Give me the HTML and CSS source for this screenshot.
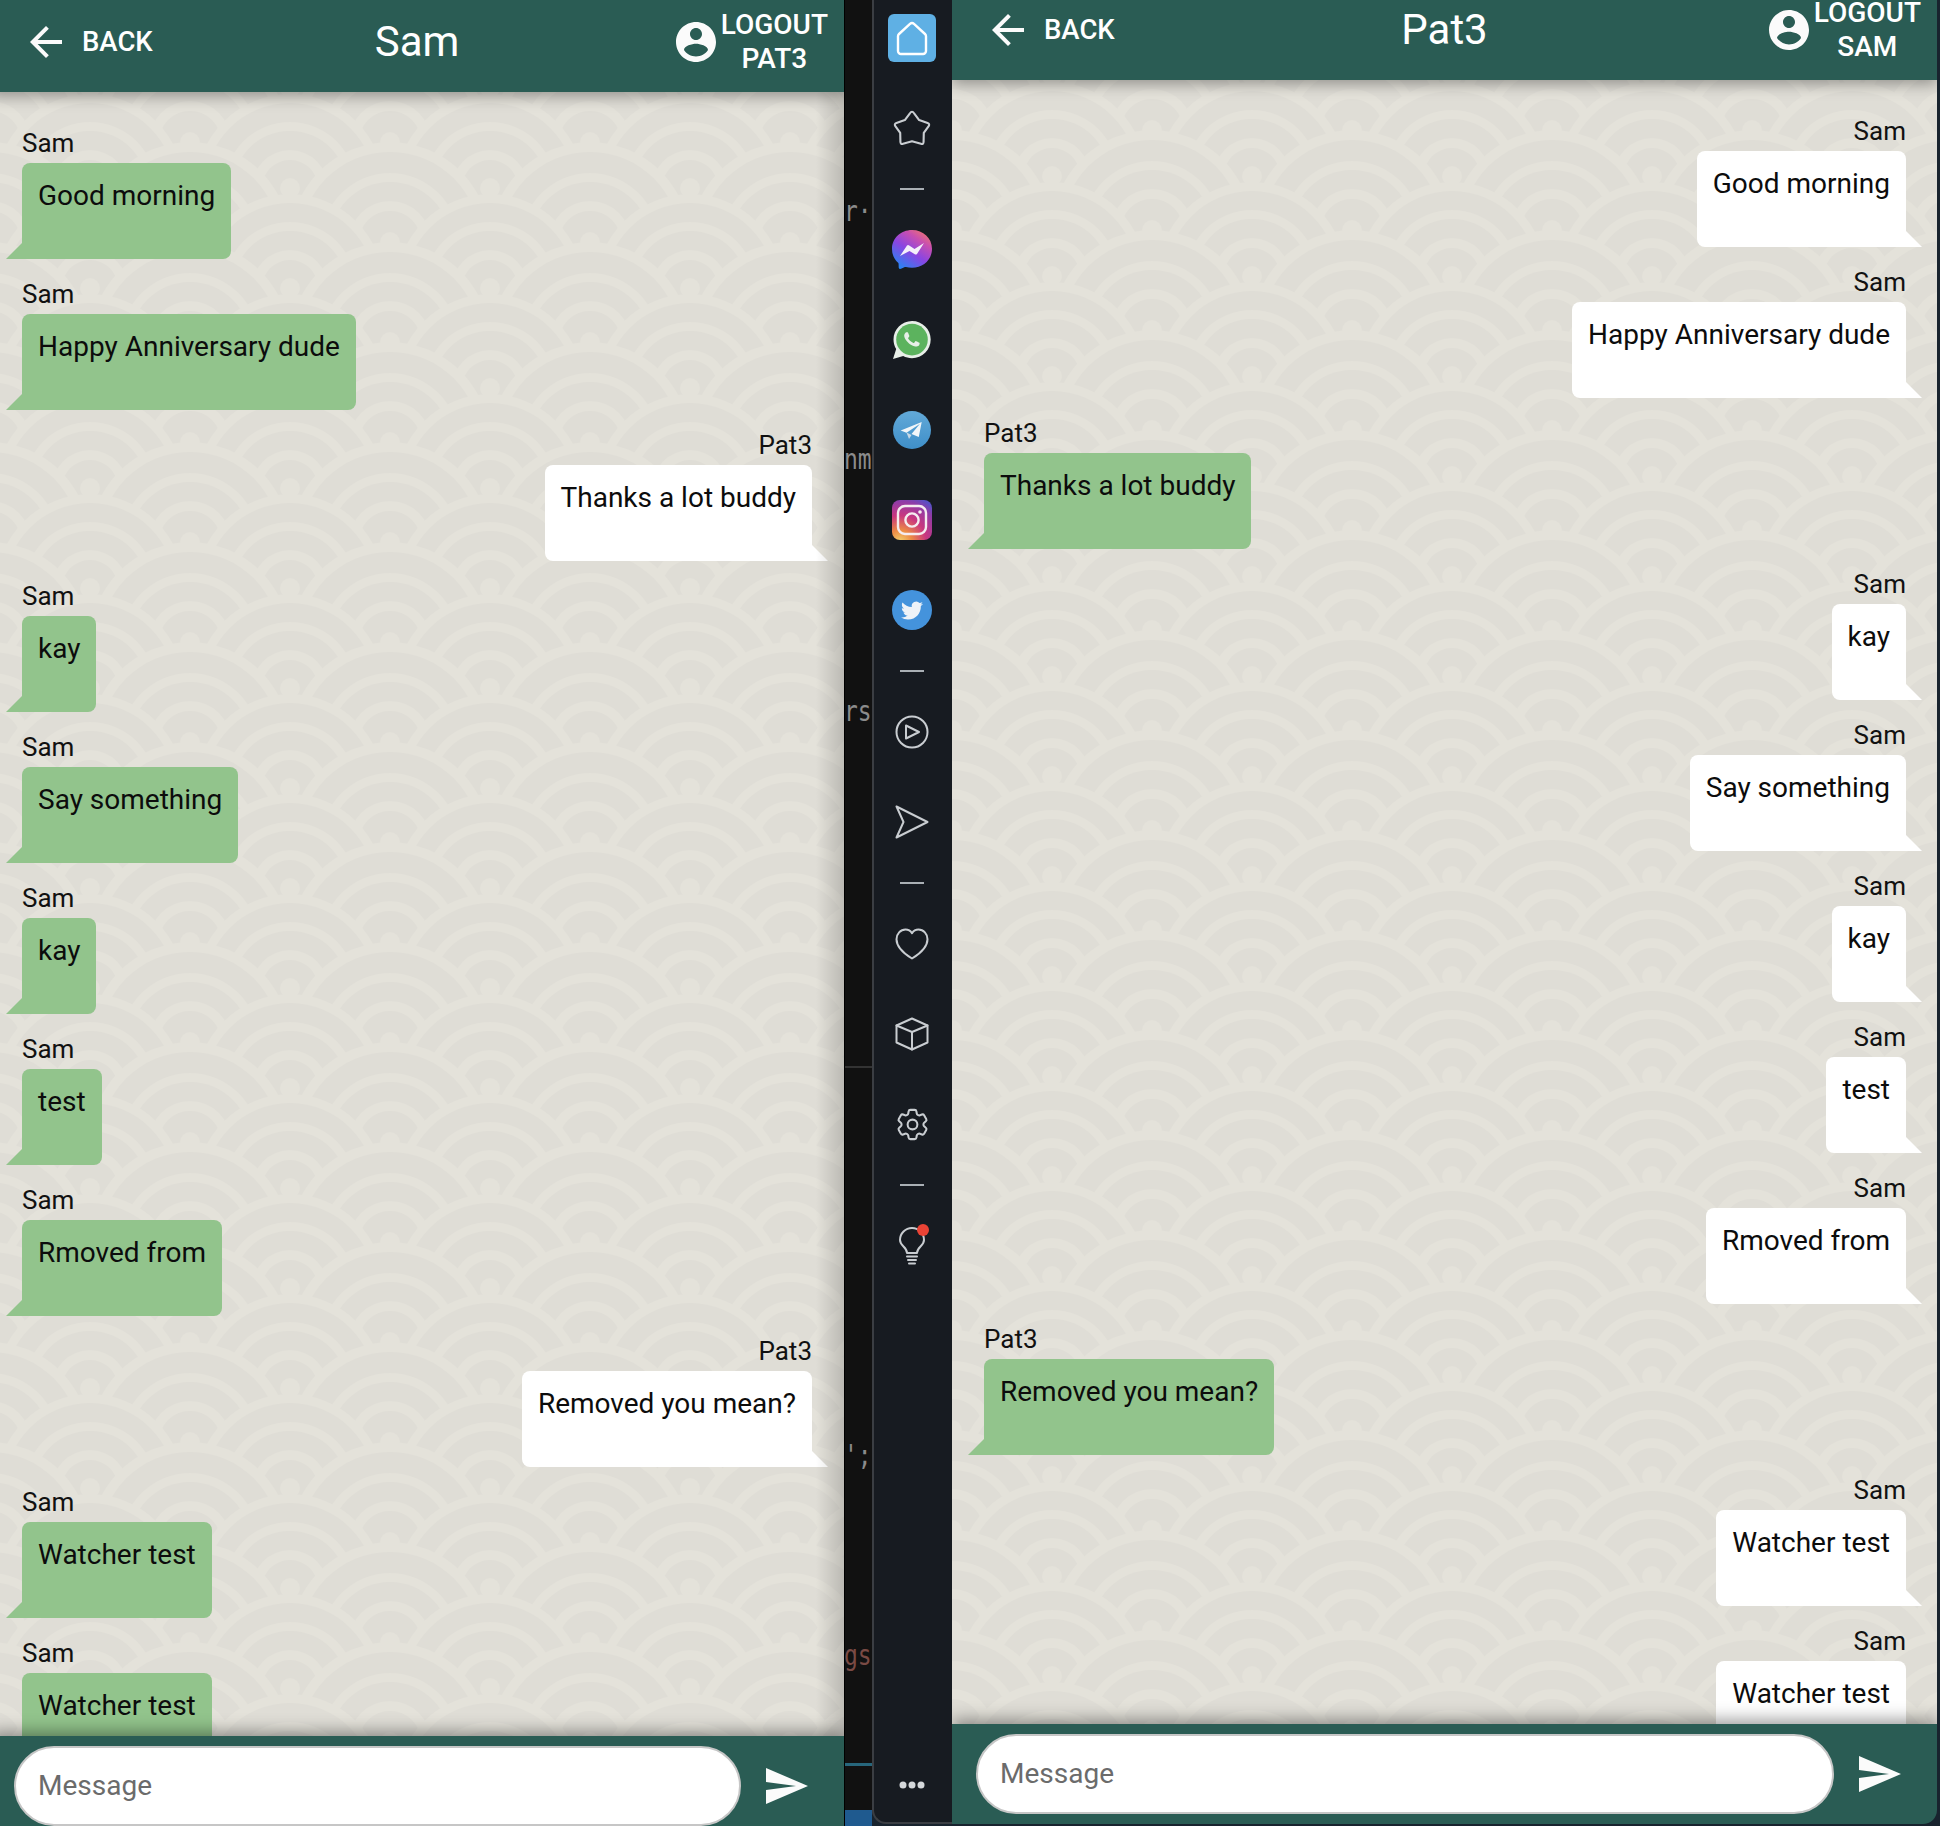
FILE: index.html
```html
<!DOCTYPE html>
<html>
<head>
    <title>Chat</title>
    <link rel="stylesheet" href="styles.css">
</head>
<body>
    <!-- shared wallpaper tile, the two rows of scales differ slightly in size -->
    <svg class="defs" width="0" height="0">
        <defs>
            <g id="scale-a">
                <circle r="94" fill="#e4e2da"/>
                <circle r="85" fill="#dfddd6"/>
                <circle r="66" fill="#e4e2da"/>
                <circle r="57" fill="#dfddd6"/>
                <circle r="38" fill="#e4e2da"/>
                <circle r="28" fill="#dfddd6"/>
                <circle r="10" fill="#e4e2da"/>
            </g>
            <g id="scale-b">
                <circle r="100" fill="#e4e2da"/>
                <circle r="90" fill="#dfddd6"/>
                <circle r="69" fill="#e4e2da"/>
                <circle r="60" fill="#dfddd6"/>
                <circle r="41" fill="#e4e2da"/>
                <circle r="31" fill="#dfddd6"/>
                <circle r="10" fill="#e4e2da"/>
            </g>
            <pattern id="waves" width="200" height="100" patternUnits="userSpaceOnUse">
                <use href="#scale-b" x="0" y="-50"/><use href="#scale-b" x="200" y="-50"/>
                <use href="#scale-a" x="-100" y="-4"/><use href="#scale-a" x="100" y="-4"/><use href="#scale-a" x="300" y="-4"/>
                <use href="#scale-b" x="0" y="50"/><use href="#scale-b" x="200" y="50"/>
                <use href="#scale-a" x="-100" y="96"/><use href="#scale-a" x="100" y="96"/><use href="#scale-a" x="300" y="96"/>
                <use href="#scale-b" x="0" y="150"/><use href="#scale-b" x="200" y="150"/>
                <use href="#scale-a" x="-100" y="196"/><use href="#scale-a" x="100" y="196"/><use href="#scale-a" x="300" y="196"/>
            </pattern>
            <linearGradient id="messenger-grad" x1="0.15" y1="1" x2="0.85" y2="0">
                <stop offset="0" stop-color="#1f8af5"/>
                <stop offset="0.45" stop-color="#8a45e2"/>
                <stop offset="0.75" stop-color="#c84fb0"/>
                <stop offset="1" stop-color="#f2786a"/>
            </linearGradient>
            <linearGradient id="telegram-grad" x1="0" y1="0" x2="0" y2="1">
                <stop offset="0" stop-color="#62a9d8"/>
                <stop offset="1" stop-color="#3f8fc9"/>
            </linearGradient>
            <radialGradient id="insta-grad" cx="0.2" cy="1.05" r="1.2">
                <stop offset="0" stop-color="#f3d46e"/>
                <stop offset="0.25" stop-color="#ec8a45"/>
                <stop offset="0.55" stop-color="#c9367f"/>
                <stop offset="0.85" stop-color="#8f3ca8"/>
                <stop offset="1" stop-color="#5a50c4"/>
            </radialGradient>
        </defs>
    </svg>

    <div class="screen">
        <!-- left phone -->
        <div class="chat chat-left">
            <header class="topbar">
                <div class="back">
                    <svg class="icon48" viewBox="0 0 24 24"><path d="M20 11H7.83l5.59-5.59L12 4l-8 8 8 8 1.41-1.41L7.83 13H20v-2z"/></svg>
                    <span>BACK</span>
                </div>
                <div class="title">Sam</div>
                <div class="logout">
                    <svg class="icon48" viewBox="0 0 24 24"><path d="M12 2C6.48 2 2 6.48 2 12s4.48 10 10 10 10-4.48 10-10S17.52 2 12 2zm0 3c1.66 0 3 1.34 3 3s-1.34 3-3 3-3-1.34-3-3 1.34-3 3-3zm0 14.2c-2.5 0-4.71-1.28-6-3.22.03-1.99 4-3.08 6-3.08 1.99 0 5.97 1.09 6 3.08-1.29 1.94-3.5 3.22-6 3.22z"/></svg>
                    <span>LOGOUT<br>PAT3</span>
                </div>
            </header>
            <main class="messages">
                <svg class="wallpaper"><rect width="100%" height="100%" fill="url(#waves)"/></svg>
                <div class="msg theirs"><div class="name">Sam</div><div class="bubble">Good morning</div></div>
                <div class="msg theirs"><div class="name">Sam</div><div class="bubble">Happy Anniversary dude</div></div>
                <div class="msg mine"><div class="name">Pat3</div><div class="bubble">Thanks a lot buddy</div></div>
                <div class="msg theirs"><div class="name">Sam</div><div class="bubble">kay</div></div>
                <div class="msg theirs"><div class="name">Sam</div><div class="bubble">Say something</div></div>
                <div class="msg theirs"><div class="name">Sam</div><div class="bubble">kay</div></div>
                <div class="msg theirs"><div class="name">Sam</div><div class="bubble">test</div></div>
                <div class="msg theirs"><div class="name">Sam</div><div class="bubble">Rmoved from</div></div>
                <div class="msg mine"><div class="name">Pat3</div><div class="bubble">Removed you mean?</div></div>
                <div class="msg theirs"><div class="name">Sam</div><div class="bubble">Watcher test</div></div>
                <div class="msg theirs"><div class="name">Sam</div><div class="bubble">Watcher test</div></div>
            </main>
            <footer class="composer">
                <div class="input">Message</div>
                <svg class="icon48" viewBox="0 0 24 24"><path d="M2.01 21L23 12 2.01 3 2 10l15 2-15 2z"/></svg>
            </footer>
        </div>

        <!-- editor peeking out behind the phones -->
        <div class="editor">
            <div class="code code-1">r&middot;</div>
            <div class="code code-2">nm</div>
            <div class="code code-3">rs</div>
            <div class="rule"></div>
            <div class="code code-4">';</div>
            <div class="code code-5">gs</div>
            <div class="editor-line"></div>
            <div class="editor-status"></div>
        </div>

        <!-- browser sidebar -->
        <nav class="sidebar">
            <div class="home">
                <svg width="32" height="35" viewBox="0 0 32 35"><path class="line white" d="M14 2.8a3 3 0 0 1 4 0L29 13a3 3 0 0 1 1 2.2V30a3 3 0 0 1-3 3H5a3 3 0 0 1-3-3V15.200a3 3 0 0 1 1-2.200z"/></svg>
            </div>
            <div class="item">
                <svg width="40" height="40" viewBox="0 -1 38 38"><path class="line" d="M19 2.500Q20 2.500 21 4L25.800 10.500 33.800 13.200Q36 14 35 16L30.200 22.700 30 31.300Q29.800 33.800 27.500 33L19 30.600 10.500 33Q8.200 33.800 8 31.300L7.800 22.700 3 16Q2 14 4.200 13.200L12.200 10.500 17 4Q18 2.500 19 2.500z"/></svg>
            </div>
            <div class="divider"></div>
            <div class="item">
                <svg width="40" height="40" viewBox="0 0 40 40">
                    <path fill="url(#messenger-grad)" d="M20 0C8.700 0 0 8.300 0 19c0 5.600 2.300 10.500 6.100 13.800.3.300.5.700.5 1.100l.1 3.500c0 1.100 1.200 1.900 2.300 1.400l3.900-1.700c.3-.100.700-.200 1-.100 1.900.500 3.900.800 6.100.800 11.300 0 20-8.300 20-19S31.300 0 20 0z"/>
                    <path fill="#f4f0fa" d="M8 26L15 15.500Q16 14.500 17.200 15.500L22.500 19 32 13 25 24Q24 25 22.800 24.300L17.500 21z"/>
                </svg>
            </div>
            <div class="item">
                <svg width="38" height="38" viewBox="0 0 38 38">
                    <path fill="#e8efe8" d="M19 0C8.700 0 .5 8.300.5 18.500c0 3.500 1 6.800 2.700 9.600L0 38l10.200-3c2.600 1.400 5.600 2.200 8.800 2.200 10.300 0 18.700-8.400 18.700-18.700S29.300 0 19 0z"/>
                    <circle cx="19" cy="18.600" r="15.800" fill="#5cb35e"/>
                    <path fill="#e8efe8" transform="translate(3.500 3) scale(1.280)" d="M17.472 14.382c-.297-.149-1.758-.867-2.030-.967-.273-.099-.471-.148-.670.150-.197.297-.767.966-.940 1.164-.173.199-.347.223-.644.075-.297-.150-1.255-.463-2.390-1.475-.883-.788-1.480-1.761-1.653-2.059-.173-.297-.018-.458.130-.606.134-.133.298-.347.446-.520.149-.174.198-.298.298-.497.099-.198.050-.371-.025-.520-.075-.149-.669-1.612-.916-2.207-.242-.579-.487-.500-.669-.510-.173-.008-.371-.010-.570-.010-.198 0-.520.074-.792.372-.272.297-1.040 1.016-1.040 2.479 0 1.462 1.065 2.875 1.213 3.074.149.198 2.096 3.200 5.077 4.487.709.306 1.262.489 1.694.625.712.227 1.360.195 1.871.118.571-.085 1.758-.719 2.006-1.413.248-.694.248-1.289.173-1.413-.074-.124-.272-.198-.570-.347z"/>
                </svg>
            </div>
            <div class="item">
                <svg width="38" height="38" viewBox="0 0 38 38">
                    <circle cx="19" cy="19" r="19" fill="url(#telegram-grad)"/>
                    <path fill="#c9d9e6" d="M13.500 21.500L16 28 18.500 24z"/>
                    <path fill="#f2f6f9" d="M7.700 19.500L28.700 11 25.800 26 18.500 23 27 12.800 13.500 21.700z"/>
                </svg>
            </div>
            <div class="item">
                <svg width="40" height="40" viewBox="0 0 40 40">
                    <rect width="40" height="40" rx="8" fill="url(#insta-grad)"/>
                    <rect x="6" y="6" width="28" height="28" rx="7" fill="none" stroke="#f5ecef" stroke-width="2.400"/>
                    <circle cx="20" cy="20" r="6.600" fill="none" stroke="#f5ecef" stroke-width="2.400"/>
                    <circle cx="28" cy="12" r="1.800" fill="#f5ecef"/>
                </svg>
            </div>
            <div class="item">
                <svg width="40" height="40" viewBox="0 0 40 40">
                    <circle cx="20" cy="20" r="20" fill="#4493dc"/>
                    <path fill="#eef3f8" transform="translate(9 9.500) scale(.92)" d="M23.953 4.570a10 10 0 01-2.825.775 4.958 4.958 0 002.163-2.723c-.951.555-2.005.959-3.127 1.184a4.920 4.920 0 00-8.384 4.482C7.690 8.095 4.067 6.130 1.640 3.162a4.822 4.822 0 00-.666 2.475c0 1.710.870 3.213 2.188 4.096a4.904 4.904 0 01-2.228-.616v.060a4.923 4.923 0 003.946 4.827 4.996 4.996 0 01-2.212.085 4.936 4.936 0 004.604 3.417 9.867 9.867 0 01-6.102 2.105c-.390 0-.779-.023-1.170-.067a13.995 13.995 0 007.557 2.209c9.053 0 13.998-7.496 13.998-13.985 0-.210 0-.420-.015-.630A9.935 9.935 0 0024 4.590z"/>
                </svg>
            </div>
            <div class="divider"></div>
            <div class="item">
                <svg width="34" height="34" viewBox="0 0 34 34"><circle class="line" cx="17" cy="17" r="15.500"/><path class="line" d="M11 10.500L24 17 11 23.500z"/></svg>
            </div>
            <div class="item">
                <svg width="34" height="34" viewBox="0 0 34 34"><path class="line" d="M1.500 1.500L32.500 17 1.500 32.500 8.500 17z"/></svg>
            </div>
            <div class="divider"></div>
            <div class="item">
                <svg width="34" height="32" viewBox="0 0 34 32"><path class="line" d="M17 30.500C8 25 1.500 19 1.500 11.200 1.500 5.800 5.500 1.500 10.500 1.500c2.800 0 5 1.300 6.500 3.700 1.500-2.400 3.700-3.700 6.500-3.700 5 0 9 4.300 9 9.700 0 7.800-6.500 13.800-15.500 19.300z"/></svg>
            </div>
            <div class="item">
                <svg width="34" height="34" viewBox="0 0 34 34"><path class="line" d="M17 1.500L32.500 8.500V25.500L17 32.500 1.500 25.500V8.500z"/><path class="line" d="M1.500 8.500L17 15 32.500 8.500M17 15V32.500"/></svg>
            </div>
            <div class="item">
                <svg width="39" height="39" viewBox="0 0 24 24"><path class="line thin" d="M9.594 3.940c.090-.542.560-.940 1.110-.940h2.593c.550 0 1.020.398 1.110.940l.213 1.281c.063.374.313.686.645.870.074.040.147.083.220.127.325.196.720.257 1.075.124l1.217-.456a1.125 1.125 0 011.370.490l1.296 2.247a1.125 1.125 0 01-.260 1.431l-1.003.827c-.293.240-.438.613-.431.992a6.759 6.759 0 010 .255c-.007.378.138.750.430.990l1.005.828c.424.350.534.954.260 1.430l-1.298 2.247a1.125 1.125 0 01-1.369.491l-1.217-.456c-.355-.133-.750-.072-1.076.124a6.570 6.570 0 01-.220.128c-.331.183-.581.495-.644.869l-.213 1.280c-.090.543-.560.941-1.110.941h-2.594c-.550 0-1.020-.398-1.110-.940l-.213-1.281c-.062-.374-.312-.686-.644-.870a6.520 6.520 0 01-.220-.127c-.325-.196-.720-.257-1.076-.124l-1.217.456a1.125 1.125 0 01-1.369-.490l-1.297-2.247a1.125 1.125 0 01.260-1.431l1.004-.827c.292-.240.437-.613.430-.992a6.932 6.932 0 010-.255c.007-.378-.138-.750-.430-.990l-1.004-.828a1.125 1.125 0 01-.260-1.430l1.297-2.247a1.125 1.125 0 011.370-.491l1.216.456c.356.133.751.072 1.076-.124.072-.044.146-.087.220-.128.332-.183.582-.495.644-.869l.214-1.281z"/><circle class="line thin" cx="12" cy="12" r="3"/></svg>
            </div>
            <div class="divider"></div>
            <div class="item bulb">
                <svg width="26" height="38" viewBox="0 0 26 38"><path class="line" d="M8 26c0-3-1.500-4.500-3.500-6.500C2.500 17.500 1 15.300 1 13 1 6.400 6.400 1 13 1s12 5.400 12 12c0 2.300-1.500 4.500-3.500 6.500-2 2-3.500 3.500-3.500 6.500z"/><path class="line" d="M8 29.500H18M9 33H17M10 36.500H16"/></svg>
                <span class="dot"></span>
            </div>
            <div class="more">
                <svg width="26" height="8" viewBox="0 0 26 8"><circle cx="4" cy="4" r="3.500"/><circle cx="13" cy="4" r="3.500"/><circle cx="22" cy="4" r="3.500"/></svg>
            </div>
        </nav>

        <!-- right phone -->
        <div class="chat chat-right">
            <header class="topbar">
                <div class="back">
                    <svg class="icon48" viewBox="0 0 24 24"><path d="M20 11H7.83l5.59-5.59L12 4l-8 8 8 8 1.41-1.41L7.83 13H20v-2z"/></svg>
                    <span>BACK</span>
                </div>
                <div class="title">Pat3</div>
                <div class="logout">
                    <svg class="icon48" viewBox="0 0 24 24"><path d="M12 2C6.48 2 2 6.48 2 12s4.48 10 10 10 10-4.48 10-10S17.52 2 12 2zm0 3c1.66 0 3 1.34 3 3s-1.34 3-3 3-3-1.34-3-3 1.34-3 3-3zm0 14.2c-2.5 0-4.71-1.28-6-3.22.03-1.99 4-3.08 6-3.08 1.99 0 5.97 1.09 6 3.08-1.29 1.94-3.5 3.22-6 3.22z"/></svg>
                    <span>LOGOUT<br>SAM</span>
                </div>
            </header>
            <main class="messages">
                <svg class="wallpaper"><rect width="100%" height="100%" fill="url(#waves)"/></svg>
                <div class="msg mine"><div class="name">Sam</div><div class="bubble">Good morning</div></div>
                <div class="msg mine"><div class="name">Sam</div><div class="bubble">Happy Anniversary dude</div></div>
                <div class="msg theirs"><div class="name">Pat3</div><div class="bubble">Thanks a lot buddy</div></div>
                <div class="msg mine"><div class="name">Sam</div><div class="bubble">kay</div></div>
                <div class="msg mine"><div class="name">Sam</div><div class="bubble">Say something</div></div>
                <div class="msg mine"><div class="name">Sam</div><div class="bubble">kay</div></div>
                <div class="msg mine"><div class="name">Sam</div><div class="bubble">test</div></div>
                <div class="msg mine"><div class="name">Sam</div><div class="bubble">Rmoved from</div></div>
                <div class="msg theirs"><div class="name">Pat3</div><div class="bubble">Removed you mean?</div></div>
                <div class="msg mine"><div class="name">Sam</div><div class="bubble">Watcher test</div></div>
                <div class="msg mine"><div class="name">Sam</div><div class="bubble">Watcher test</div></div>
            </main>
            <footer class="composer">
                <div class="input">Message</div>
                <svg class="icon48" viewBox="0 0 24 24"><path d="M2.01 21L23 12 2.01 3 2 10l15 2-15 2z"/></svg>
            </footer>
        </div>
    </div>
</body>
</html>
```

FILE: styles.css
```css
* {
    box-sizing: border-box;
}
body {
    margin: 0;
    font-family: Roboto, "Liberation Sans", sans-serif;
    background-color: #18232e;
}
.defs {
    position: absolute;
}
.screen {
    display: flex;
    height: 1826px;
    overflow: hidden;
}

/* phones */
.chat {
    flex: none;
    display: flex;
    flex-direction: column;
    height: 1836px;
    overflow: hidden;
}
.chat-left {
    width: 854px;
    margin-left: -10px;
}
.chat-right {
    width: 985px;
    margin-top: -12px;
    border-bottom-right-radius: 14px;
}
.topbar {
    flex: none;
    position: relative;
    z-index: 2;
    display: grid;
    grid-template-columns: 1fr auto 1fr;
    align-items: center;
    height: 92px;
    padding: 0 16px 9px;
    background-color: #2a5c54;
    color: white;
    box-shadow: 0 4px 14px rgba(0,0,0,0.35);
}
.icon48 {
    flex: none;
    width: 48px;
    height: 48px;
    fill: #fbfbfb;
}
.back {
    display: flex;
    align-items: center;
    gap: 12px;
    margin-left: 16px;
    font-size: 27.5px;
    font-weight: 500;
}
.title {
    font-size: 42px;
}
.logout {
    display: flex;
    align-items: center;
    justify-content: flex-end;
    gap: 1px;
    font-size: 28px;
    font-weight: 500;
    line-height: 34px;
    text-align: center;
}
.messages {
    flex: 1;
    position: relative;
    display: flex;
    flex-direction: column;
    min-height: 0;
    padding: 37px 32px 0;
    overflow: hidden;
    background-color: #e4e2da;
}
.chat-right .messages {
    padding-right: 31px;
}
.wallpaper {
    position: absolute;
    top: 0;
    left: 0;
    width: 100%;
    height: 100%;
}
.chat-left .messages::after {
    content: "";
    position: absolute;
    top: 0;
    right: 0;
    bottom: 0;
    width: 28px;
    background: linear-gradient(to right, rgba(0,0,0,0), rgba(0,0,0,0.16));
}
.msg {
    flex: none;
    position: relative;
    margin-bottom: 21px;
}
.name {
    height: 30px;
    margin-bottom: 4px;
    font-size: 26px;
    line-height: 28px;
    color: #111;
}
.bubble {
    position: relative;
    height: 96px;
    padding: 16px 16px 0;
    border-radius: 8px;
    font-size: 28px;
    line-height: 33px;
    color: #0c0c0c;
}
.bubble::after {
    content: "";
    position: absolute;
    bottom: 0;
    width: 0;
    height: 0;
    border-style: solid;
}
.theirs {
    align-self: flex-start;
}
.theirs .bubble {
    background-color: #92c48c;
    border-bottom-left-radius: 0;
}
.theirs .bubble::after {
    left: -16px;
    border-width: 0 0 16px 16px;
    border-color: transparent transparent #92c48c transparent;
}
.mine {
    align-self: flex-end;
    text-align: right;
}
.mine .bubble {
    background-color: white;
    border-bottom-right-radius: 0;
    text-align: left;
}
.mine .bubble::after {
    right: -16px;
    border-width: 16px 0 0 16px;
    border-color: transparent transparent transparent white;
}
.composer {
    flex: none;
    position: relative;
    z-index: 2;
    display: flex;
    align-items: center;
    gap: 21px;
    height: 100px;
    padding: 10px 34px 10px 24px;
    background-color: #2a5c54;
    box-shadow: 0 -4px 16px rgba(0,0,0,0.4);
}
.input {
    flex: 1;
    height: 80px;
    padding-left: 22px;
    border: 2px solid #c6c6c6;
    border-radius: 40px;
    background-color: white;
    font-size: 28px;
    line-height: 76px;
    color: #6b6b6b;
}

/* code editor behind */
.editor {
    flex: none;
    position: relative;
    width: 28px;
    border-left: 1px solid #000;
    overflow: hidden;
    background-color: #111;
    font-family: "DejaVu Sans Mono", monospace;
    font-size: 23px;
    color: #8b8b8b;
}
.code {
    height: 24px;
    margin-left: -1px;
    line-height: 24px;
    white-space: nowrap;
    transform: scaleY(1.25);
}
.code-1 { margin-top: 199px; }
.code-2 { margin-top: 224px; }
.code-3 { margin-top: 228px; }
.rule {
    height: 2px;
    margin-top: 343px;
    background-color: #333;
}
.code-4 { margin-top: 375px; }
.code-5 { margin-top: 176px; color: #7a4a44; }
.editor-line {
    height: 3px;
    margin-top: 96px;
    background-color: #27667c;
}
.editor-status {
    height: 60px;
    margin-top: 44px;
    background-color: #1f5a8f;
}

/* sidebar */
.sidebar {
    flex: none;
    display: flex;
    flex-direction: column;
    align-items: center;
    width: 80px;
    height: 1824px;
    padding-right: 2px;
    border-left: 2px solid #3b3e43;
    border-bottom: 2px solid #3b3e43;
    border-bottom-left-radius: 14px;
    background-color: #171b21;
}
.home {
    flex: none;
    display: flex;
    align-items: center;
    justify-content: center;
    width: 48px;
    height: 48px;
    margin: 14px 0 21px;
    border-radius: 6px;
    background-color: #5fb0e4;
}
.item {
    flex: none;
    position: relative;
    display: flex;
    align-items: center;
    justify-content: center;
    width: 100%;
    height: 90px;
}
.divider {
    flex: none;
    width: 24px;
    height: 2px;
    margin: 15px 0;
    background-color: #aab0b5;
}
.line {
    fill: none;
    stroke: #c9cdd1;
    stroke-width: 2;
    stroke-linejoin: round;
    stroke-linecap: round;
}
.thin {
    stroke-width: 1.25;
}
.white {
    stroke: white;
    stroke-width: 2.4;
}
.dot {
    position: absolute;
    top: 23px;
    left: 43px;
    width: 12px;
    height: 12px;
    border-radius: 50%;
    background-color: #ea4335;
}
.more {
    display: flex;
    margin-top: auto;
    padding-bottom: 33px;
    fill: #d5d8db;
}
```
